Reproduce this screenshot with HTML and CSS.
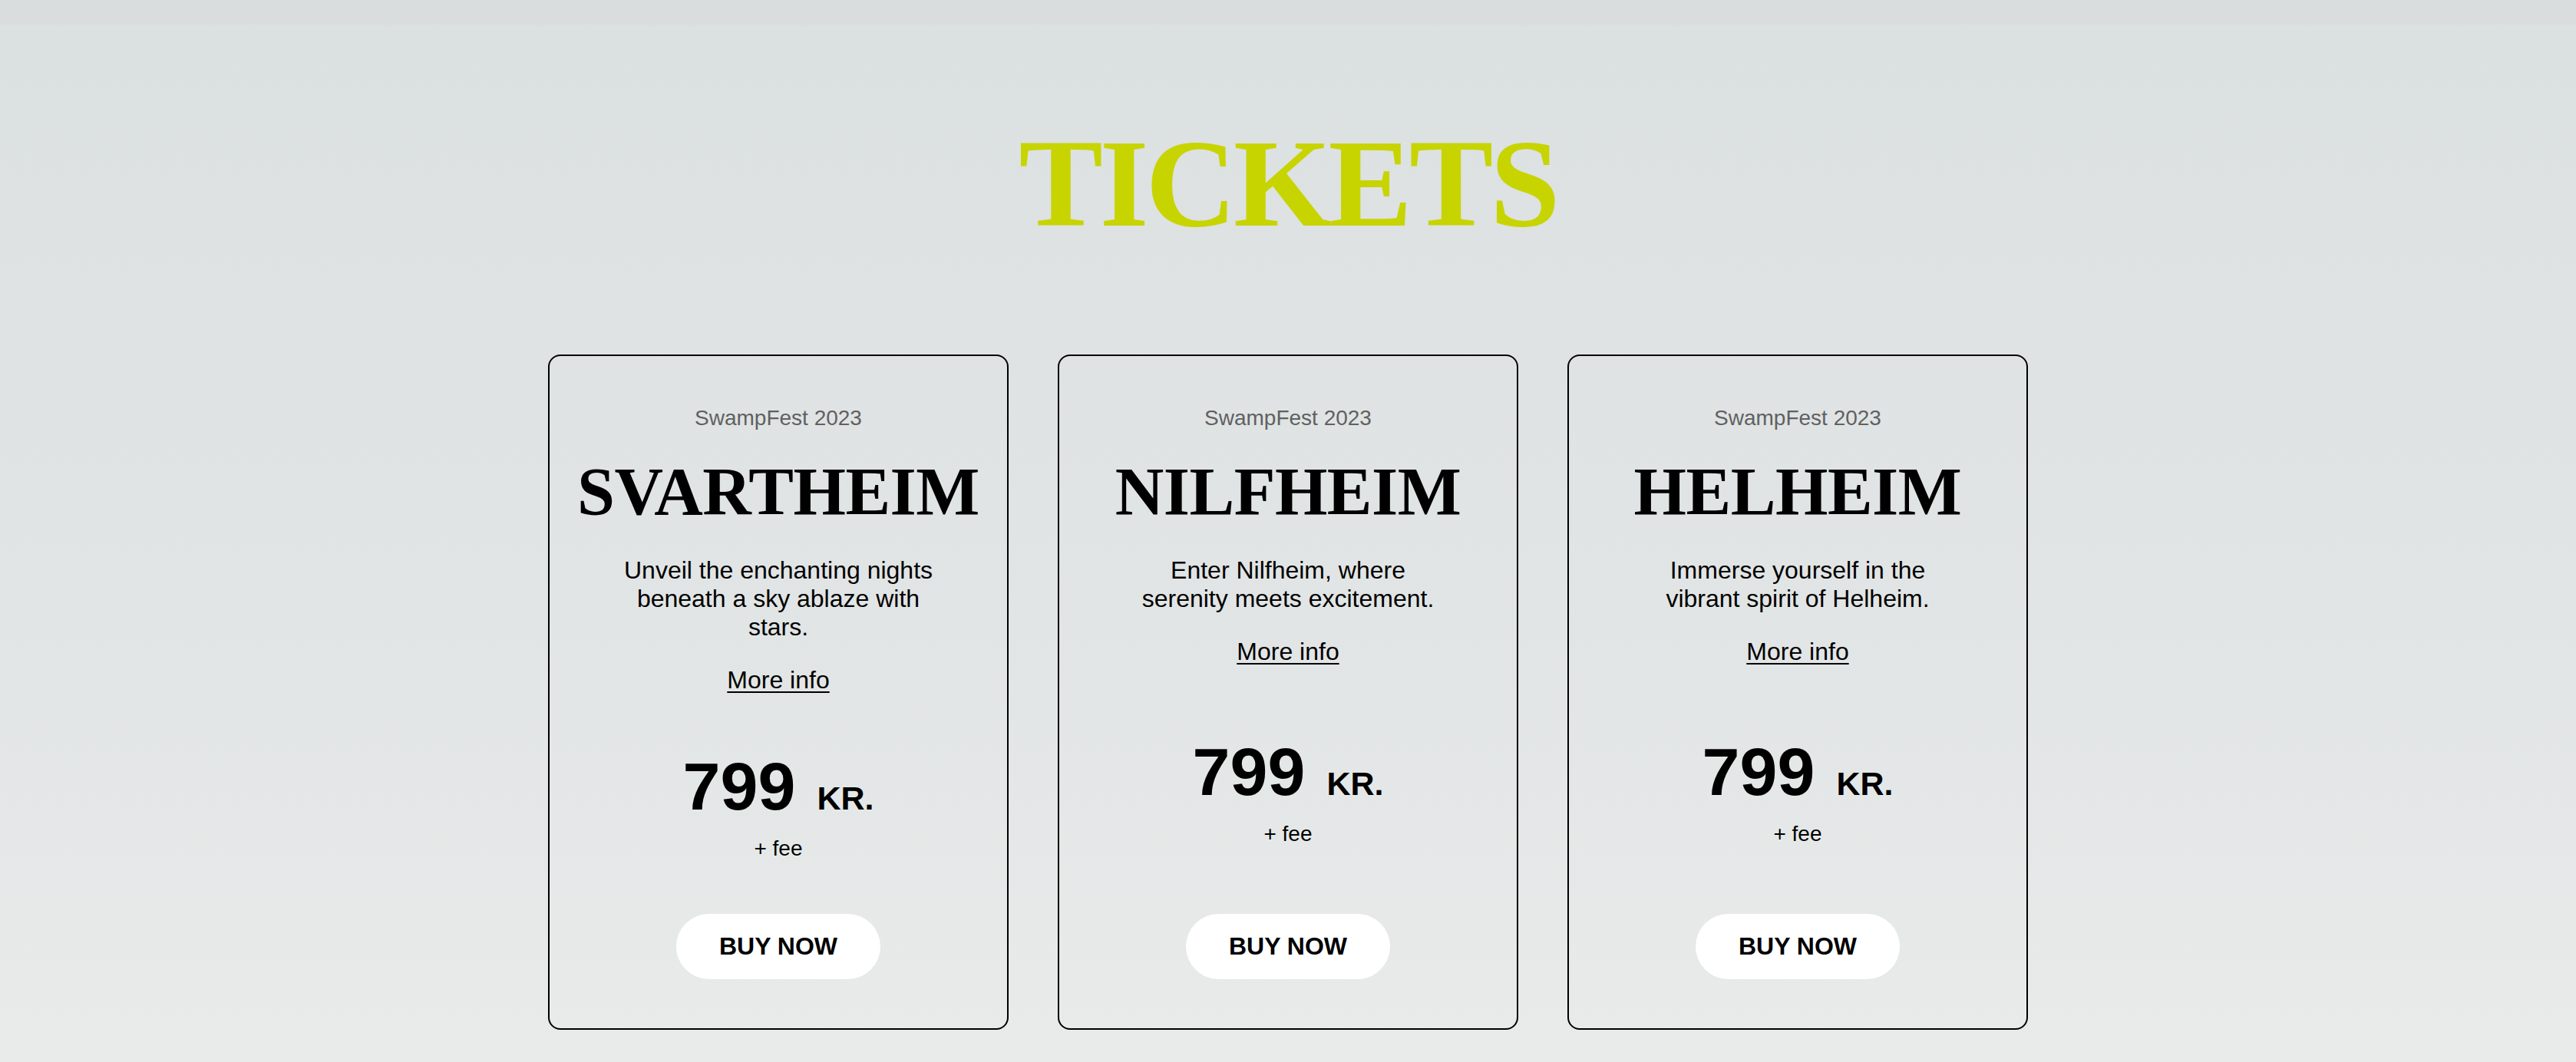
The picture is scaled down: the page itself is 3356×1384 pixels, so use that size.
FILE: index.html
```html
<!DOCTYPE html>
<html lang="en">
<head>
<meta charset="utf-8">
<title>Tickets</title>
<link rel="stylesheet" href="styles.css">
</head>
<body>
<div class="topbar"></div>
<main class="tickets">
  <h1 class="tickets-title">TICKETS</h1>
  <div class="cards">
    <article class="card">
      <p class="card-event">SwampFest 2023</p>
      <h2 class="card-title">SVARTHEIM</h2>
      <p class="card-desc">Unveil the enchanting nights beneath a sky ablaze with stars.</p>
      <a class="card-more" href="#">More info</a>
      <div class="card-price">
        <div class="price-line"><span class="price-num">799</span><span class="price-cur">KR.</span></div>
        <div class="price-fee">+ fee</div>
      </div>
      <a class="card-buy" href="#">BUY NOW</a>
    </article>
    <article class="card">
      <p class="card-event">SwampFest 2023</p>
      <h2 class="card-title">NILFHEIM</h2>
      <p class="card-desc">Enter Nilfheim, where serenity meets excitement.</p>
      <a class="card-more" href="#">More info</a>
      <div class="card-price">
        <div class="price-line"><span class="price-num">799</span><span class="price-cur">KR.</span></div>
        <div class="price-fee">+ fee</div>
      </div>
      <a class="card-buy" href="#">BUY NOW</a>
    </article>
    <article class="card">
      <p class="card-event">SwampFest 2023</p>
      <h2 class="card-title">HELHEIM</h2>
      <p class="card-desc">Immerse yourself in the vibrant spirit of Helheim.</p>
      <a class="card-more" href="#">More info</a>
      <div class="card-price">
        <div class="price-line"><span class="price-num">799</span><span class="price-cur">KR.</span></div>
        <div class="price-fee">+ fee</div>
      </div>
      <a class="card-buy" href="#">BUY NOW</a>
    </article>
  </div>
</main>
</body>
</html>
```

FILE: styles.css
```css
html, body {
  margin: 0;
  padding: 0;
}

body {
  min-height: 1384px;
  background: linear-gradient(180deg, #dbe0e0 0%, #e2e5e5 60%, #e9ebeb 100%);
  font-family: "Liberation Sans", Arial, sans-serif;
  color: #000;
}

.topbar {
  height: 32px;
  background: #d9dddd;
}

.tickets {
  display: flex;
  flex-direction: column;
  align-items: center;
}

.tickets-title {
  margin: 125px 0 0;
  font-family: "Liberation Serif", "Times New Roman", serif;
  font-weight: 700;
  font-size: 164px;
  line-height: 164px;
  letter-spacing: -4px;
  color: #c7d400;
}

.cards {
  display: flex;
  gap: 64px;
  margin-top: 141px;
}

.card {
  box-sizing: border-box;
  width: 600px;
  height: 880px;
  border: 2px solid #000;
  border-radius: 16px;
  padding: 65px 40px 64px;
  display: flex;
  flex-direction: column;
  align-items: center;
  text-align: center;
}

.card-event {
  margin: 0;
  font-size: 28px;
  line-height: 32px;
  color: #5f6162;
}

.card-title {
  margin: 30px 0 0;
  font-family: "Liberation Serif", "Times New Roman", serif;
  font-weight: 700;
  font-size: 88px;
  line-height: 100px;
  letter-spacing: -0.5px;
  white-space: nowrap;
}

.card-desc {
  margin: 34px 0 0;
  width: 410px;
  font-size: 32px;
  line-height: 37px;
}

.card-more {
  margin-top: 32px;
  font-size: 32px;
  line-height: 37px;
  color: #000;
  text-decoration: underline;
  text-decoration-thickness: 2px;
  text-underline-offset: 4px;
}

.card-price {
  margin: auto 0;
  display: flex;
  flex-direction: column;
  align-items: center;
}

.price-line {
  display: flex;
  align-items: baseline;
  gap: 28px;
  line-height: 100px;
  font-weight: 700;
}

.price-num {
  font-size: 88px;
}

.price-cur {
  font-size: 43px;
}

.price-fee {
  font-size: 28px;
  line-height: 32px;
}

.card-buy {
  box-sizing: border-box;
  width: 266px;
  height: 85px;
  border-radius: 43px;
  background: #fff;
  display: flex;
  align-items: center;
  justify-content: center;
  font-size: 32px;
  font-weight: 700;
  color: #000;
  text-decoration: none;
}
```
